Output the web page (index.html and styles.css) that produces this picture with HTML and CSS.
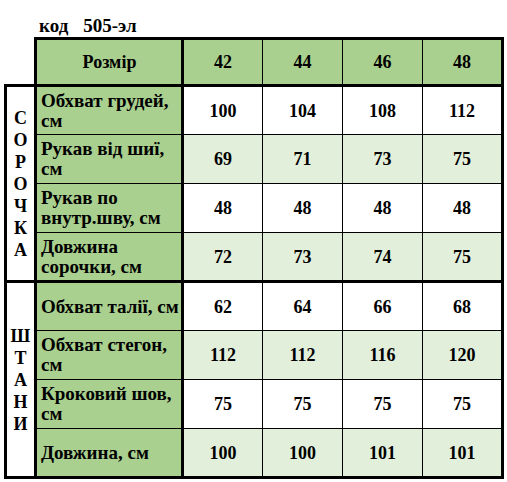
FILE: index.html
```html
<!DOCTYPE html>
<html lang="uk">
<head>
<meta charset="utf-8">
<title>Розмірна сітка 505-эл</title>
<link rel="stylesheet" href="styles.css">
</head>
<body>
<div class="code"><span class="code-word">код</span><span class="code-num">505-эл</span></div>
<table class="sizes">
  <colgroup>
    <col class="c-side">
    <col class="c-label">
    <col class="c-num">
    <col class="c-num">
    <col class="c-num">
    <col class="c-num">
  </colgroup>
  <thead>
    <tr class="head">
      <td class="blank"></td>
      <th class="label center">Розмір</th>
      <th>42</th><th>44</th><th>46</th><th class="last">48</th>
    </tr>
  </thead>
  <tbody class="group">
    <tr class="w">
      <td class="side shirt" rowspan="4">С<br>О<br>Р<br>О<br>Ч<br>К<br>А</td>
      <th class="label">Обхват грудей,<br>см</th>
      <td>100</td><td>104</td><td>108</td><td class="last">112</td>
    </tr>
    <tr class="g">
      <th class="label">Рукав від шиї,<br>см</th>
      <td>69</td><td>71</td><td>73</td><td class="last">75</td>
    </tr>
    <tr class="w">
      <th class="label">Рукав по<br>внутр.шву, см</th>
      <td>48</td><td>48</td><td>48</td><td class="last">48</td>
    </tr>
    <tr class="g">
      <th class="label">Довжина<br>сорочки, см</th>
      <td>72</td><td>73</td><td>74</td><td class="last">75</td>
    </tr>
  </tbody>
  <tbody class="group">
    <tr class="w">
      <td class="side pants" rowspan="4">Ш<br>Т<br>А<br>Н<br>И</td>
      <th class="label">Обхват талії, см</th>
      <td>62</td><td>64</td><td>66</td><td class="last">68</td>
    </tr>
    <tr class="g">
      <th class="label">Обхват стегон,<br>см</th>
      <td>112</td><td>112</td><td>116</td><td class="last">120</td>
    </tr>
    <tr class="w">
      <th class="label">Кроковий шов,<br>см</th>
      <td>75</td><td>75</td><td>75</td><td class="last">75</td>
    </tr>
    <tr class="g">
      <th class="label">Довжина, см</th>
      <td>100</td><td>100</td><td>101</td><td class="last">101</td>
    </tr>
  </tbody>
</table>
</body>
</html>
```
FILE: styles.css
```css
html, body {
  margin: 0;
  padding: 0;
  background: #ffffff;
}
body {
  font-family: "Liberation Serif", "Times New Roman", serif;
  font-weight: bold;
  color: #000000;
  font-size: 18px;
}
.code {
  height: 37px;
  box-sizing: border-box;
  padding-left: 39px;
  padding-top: 17px;
  line-height: 18px;
  font-size: 19px;
}
.code-num {
  margin-left: 15px;
}
.sizes {
  border-collapse: collapse;
  table-layout: fixed;
  width: 497px;
  margin-left: 4px;
  font-size: 18px;
}
.c-side { width: 30px; }
.c-label { width: 147px; }
.c-num { width: 80px; }

.sizes td, .sizes th {
  border: 1px solid #000;
  padding: 0 3px;
  text-align: center;
  vertical-align: middle;
  font-weight: bold;
  line-height: 20px;
  overflow: hidden;
  white-space: nowrap;
}
.sizes tr { height: 49px; }
.sizes .head { height: 47px; }
.head th {
  background: #a9d08e;
  border-top: 3px solid #000;
  border-bottom: 3px solid #000;
}
.head .blank {
  border: none;
  background: #fff;
}
.head .label { border-left: 3px solid #000; }
.sizes .label {
  background: #a9d08e;
  text-align: left;
  border-right: 3px solid #000;
  padding-left: 4px;
  font-size: 19px;
}
.sizes .head .label.center {
  text-align: center;
  font-size: 18px;
}
.sizes .last { border-right: 3px solid #000; }
.w td { background: #ffffff; }
.g td { background: #e2efda; }
.sizes td.side {
  background: #ffffff;
  border: 3px solid #000;
  padding: 0;
  line-height: 22px;
  font-size: 18px;
}
.group tr:first-child > * { border-top: 3px solid #000; }
.group tr:last-child > * { border-bottom: 3px solid #000; }
```
